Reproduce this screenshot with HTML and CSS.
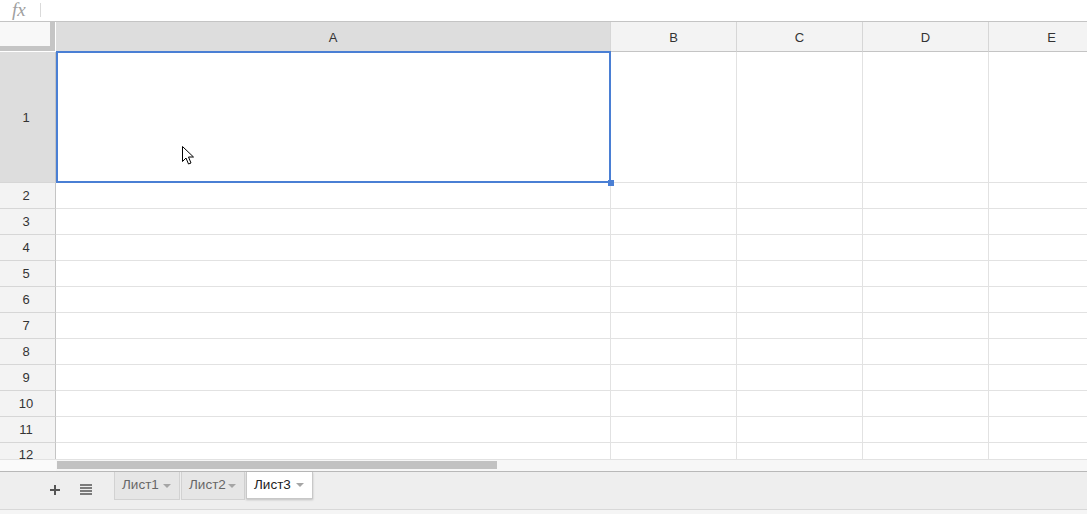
FILE: index.html
```html
<!DOCTYPE html>
<html>
<head>
<meta charset="utf-8">
<link rel="stylesheet" href="styles.css">
</head>
<body>
<div class="formula-bar">
  <span class="fx">fx</span>
  <span class="fx-sep"></span>
</div>
<div class="sheet">
  <div class="corner"></div>
  <div class="ch sel">A</div>
  <div class="ch">B</div>
  <div class="ch">C</div>
  <div class="ch">D</div>
  <div class="ch">E</div>

  <div class="rh sel">1</div>
  <div class="cell a1">
    <svg class="cursor" width="13" height="19" viewBox="0 0 13 19"><path d="M0.5 0.5 L0.5 15.5 L4 12 L6.5 18 L9 17 L6.5 11 L11.5 11 Z" fill="#fff" stroke="#000" stroke-width="1"/></svg>
    <span class="handle"></span>
  </div>
  <div class="cell"></div><div class="cell"></div><div class="cell"></div><div class="cell"></div>

  <div class="rh">2</div><div class="cell"></div><div class="cell"></div><div class="cell"></div><div class="cell"></div><div class="cell"></div>
  <div class="rh">3</div><div class="cell"></div><div class="cell"></div><div class="cell"></div><div class="cell"></div><div class="cell"></div>
  <div class="rh">4</div><div class="cell"></div><div class="cell"></div><div class="cell"></div><div class="cell"></div><div class="cell"></div>
  <div class="rh">5</div><div class="cell"></div><div class="cell"></div><div class="cell"></div><div class="cell"></div><div class="cell"></div>
  <div class="rh">6</div><div class="cell"></div><div class="cell"></div><div class="cell"></div><div class="cell"></div><div class="cell"></div>
  <div class="rh">7</div><div class="cell"></div><div class="cell"></div><div class="cell"></div><div class="cell"></div><div class="cell"></div>
  <div class="rh">8</div><div class="cell"></div><div class="cell"></div><div class="cell"></div><div class="cell"></div><div class="cell"></div>
  <div class="rh">9</div><div class="cell"></div><div class="cell"></div><div class="cell"></div><div class="cell"></div><div class="cell"></div>
  <div class="rh">10</div><div class="cell"></div><div class="cell"></div><div class="cell"></div><div class="cell"></div><div class="cell"></div>
  <div class="rh">11</div><div class="cell"></div><div class="cell"></div><div class="cell"></div><div class="cell"></div><div class="cell"></div>
  <div class="rh last">12</div><div class="cell"></div><div class="cell"></div><div class="cell"></div><div class="cell"></div><div class="cell"></div>
</div>
<div class="hscroll">
  <div class="hs-left"></div>
  <div class="hs-track"><div class="hs-thumb"></div></div>
</div>
<div class="tabbar">
  <div class="tb-icons">
    <svg width="12" height="12" viewBox="0 0 12 12"><path d="M6 1 V11 M1 6 H11" stroke="#555" stroke-width="2"/></svg>
    <svg width="12" height="11" viewBox="0 0 12 11"><path d="M0 1 H12 M0 4 H12 M0 7 H12 M0 10 H12" stroke="#555" stroke-width="1.6"/></svg>
  </div>
  <div class="tabs">
    <div class="tab">Лист1<span class="caret"></span></div>
    <div class="tab">Лист2<span class="caret"></span></div>
    <div class="tab active">Лист3<span class="caret"></span></div>
  </div>
</div>
<div class="bottom-strip"></div>
</body>
</html>
```
FILE: styles.css
```css
* { box-sizing: border-box; }
html, body { margin: 0; padding: 0; background: #fff; }
body {
  font-family: "Liberation Sans", Arial, sans-serif;
  font-size: 13px;
  color: #222;
  width: 1087px;
  height: 515px;
  overflow: hidden;
}
.formula-bar {
  height: 22px;
  border-bottom: 1px solid #c4c4c4;
  display: flex;
  align-items: flex-start;
  padding-left: 12px;
  gap: 14px;
}
.fx {
  font-family: "Liberation Serif", "Times New Roman", serif;
  font-style: italic;
  font-size: 19px;
  color: #a0a0a0;
  line-height: 20px;
  padding-top: 0;
}
.fx-sep {
  width: 1px;
  height: 14px;
  background: #dadada;
  margin-top: 3px;
}
.sheet {
  height: 437px;
  overflow: hidden;
  display: grid;
  grid-template-columns: 56px 555px 126px 126px 126px 126px;
  grid-template-rows: 30px 131px repeat(12, 26px);
}
.corner {
  background: #f8f8f8;
  border-right: 5px solid #c5c5c5;
  border-bottom: 5px solid #c5c5c5;
  margin-right: 1px;
  margin-bottom: 1px;
}
.ch {
  background: #f3f3f3;
  border-right: 1px solid #d6d6d6;
  border-bottom: 1px solid #c4c4c4;
  display: flex;
  align-items: center;
  justify-content: center;
  color: #333;
  font-size: 13px;
  padding-top: 1px;
}
.ch.sel { background: #dddddd; }
.rh {
  background: #f3f3f3;
  border-right: 1px solid #c4c4c4;
  border-bottom: 1px solid #d6d6d6;
  display: flex;
  align-items: center;
  justify-content: center;
  color: #333;
  font-size: 13px;
  padding-right: 3px;
}
.rh.last { align-items: flex-start; padding-top: 4px; }
.rh.sel { background: #dddddd; }
.cell {
  border-right: 1px solid #e2e2e2;
  border-bottom: 1px solid #e2e2e2;
}
.a1 {
  position: relative;
}
.a1::after {
  content: "";
  position: absolute;
  left: 0;
  top: -1px;
  right: -1px;
  bottom: -1px;
  border: 2px solid #4a7fd4;
}
.a1 .cursor {
  position: absolute;
  left: 126px;
  top: 94px;
}
.a1 .handle {
  position: absolute;
  right: -4px;
  bottom: -4px;
  width: 6px;
  height: 6px;
  background: #4a7fd4;
  z-index: 2;
}
.hscroll {
  height: 13px;
  display: flex;
  border-bottom: 1px solid #b8b8b8;
}
.hs-left {
  width: 56px;
  background: #fafafa;
  border-top: 1px solid #e2e2e2;
}
.hs-track {
  flex: 1;
  background: #f7f7f7;
  border-top: 1px solid #e2e2e2;
  padding: 1px 0 2px 1px;
}
.hs-thumb {
  width: 440px;
  height: 100%;
  background: #c2c2c2;
}
.tabbar {
  height: 38px;
  background: #eeeeee;
  display: flex;
  align-items: flex-start;
  border-bottom: 1px solid #d8d8d8;
}
.tb-icons {
  width: 114px;
  display: flex;
  align-items: center;
  justify-content: flex-end;
  gap: 19px;
  padding-right: 22px;
  height: 35px;
}
.tabs {
  display: flex;
  align-items: flex-start;
}
.tab {
  height: 28px;
  display: flex;
  align-items: center;
  padding: 0 8px 2px 7px;
  background: #e6e6e6;
  border: 1px solid #d2d2d2;
  border-top: none;
  margin-right: 1px;
  color: #666;
  font-size: 13.5px;
  width: 66px;
}
.tab + .tab { width: 64px; }
.tab.active {
  background: #fff;
  color: #222;
  width: 67px;
  box-shadow: 0 1px 2px rgba(0,0,0,0.2);
  border-color: #c8c8c8;
  height: 27px;
}
.caret {
  margin-left: auto;
  width: 0;
  height: 0;
  border-left: 4px solid transparent;
  border-right: 4px solid transparent;
  border-top: 4px solid #a5a5a5;
  margin-top: 2px;
}
.bottom-strip {
  height: 4px;
  background: #f5f5f5;
}
```
